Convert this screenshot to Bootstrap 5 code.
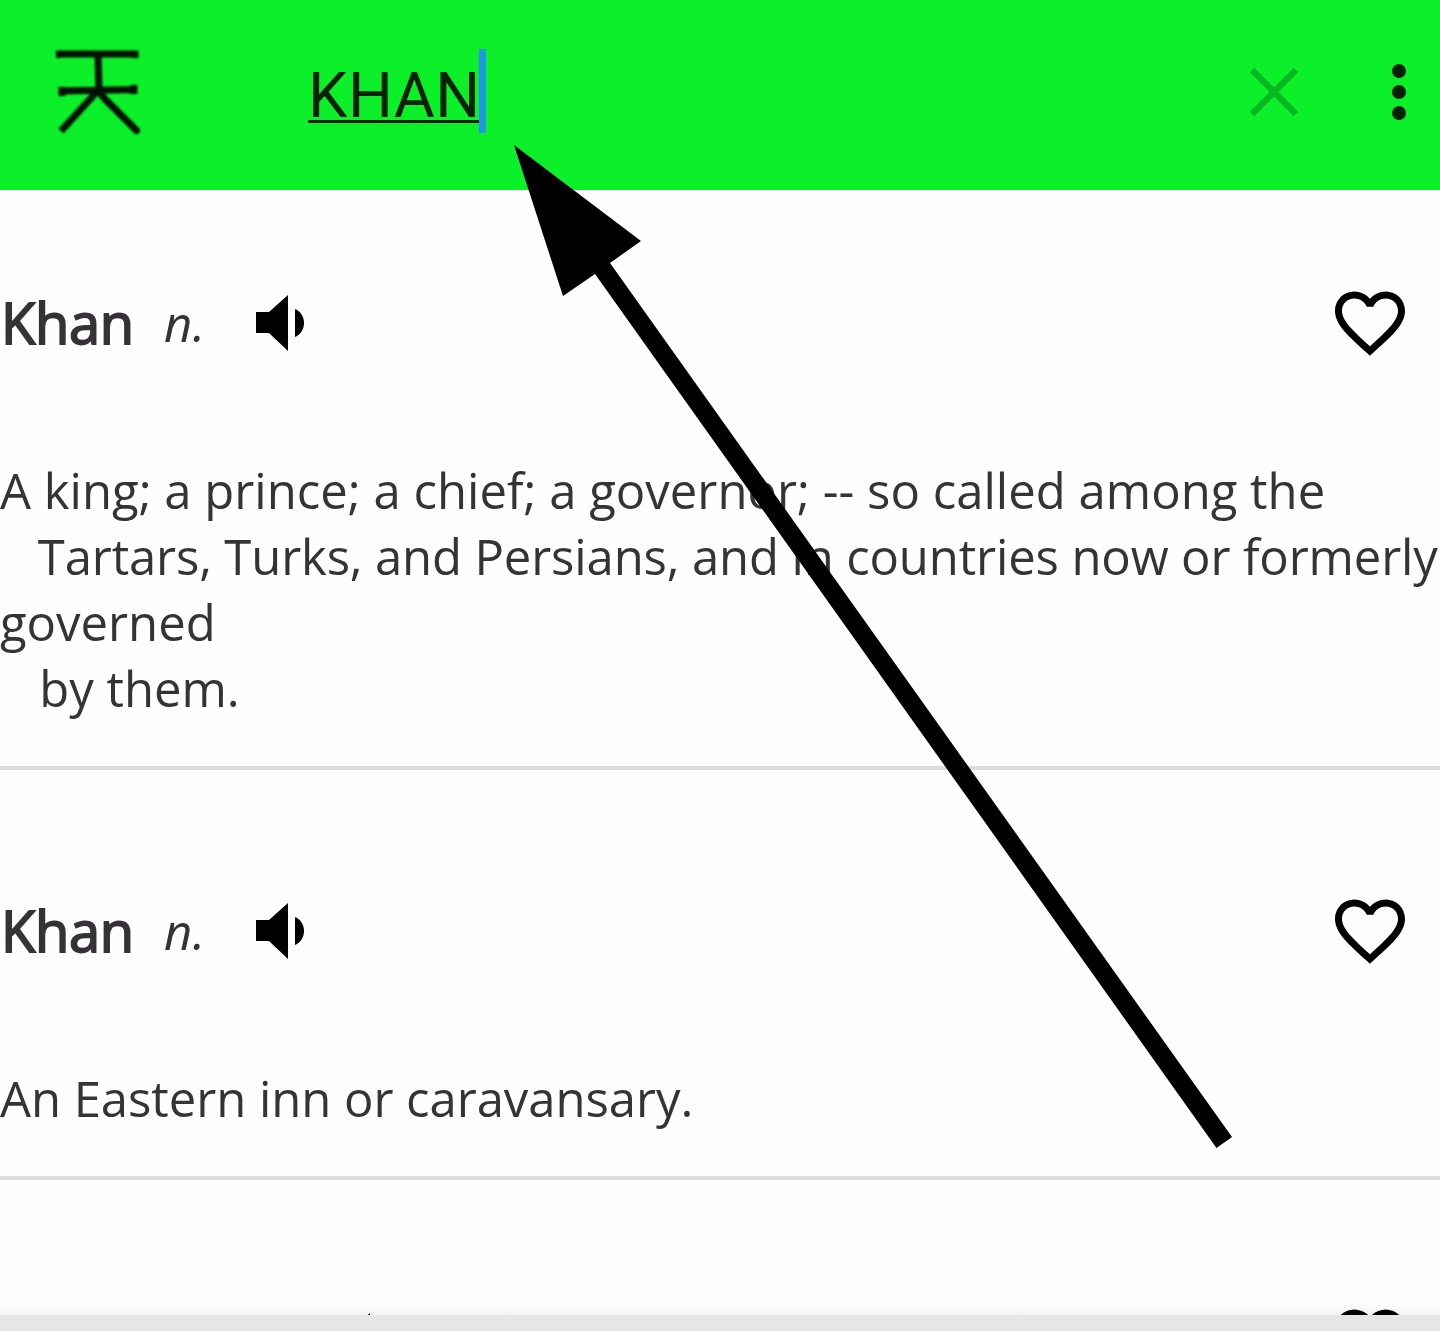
<!DOCTYPE html>
<html lang="en">
<head>
<meta charset="utf-8">
<meta name="viewport" content="width=device-width, initial-scale=1">
<title>KHAN</title>
<link href="https://cdn.jsdelivr.net/npm/bootstrap@5.3.0/dist/css/bootstrap.min.css" rel="stylesheet">
<style>
  html, body { height: 1331px; overflow: hidden; }
  body { background: #fefefe; color: #353335; font-family: "Open Sans", "Noto Sans", sans-serif; }
  .topbar { height: 190px; padding: 0 34px 6px 56px; background: #0cf029; }
  .logo { filter: blur(.8px); }
  .query { margin-left: 168px; padding-top: 2px; font: 400 63px/84px Roboto, sans-serif; color: #052209; letter-spacing: .4px; }
  .query-text { padding-top: 5px; text-decoration: underline; text-decoration-thickness: 3px; text-underline-offset: 3px; text-decoration-skip-ink: none; }
  .caret { width: 7px; height: 84px; background: #2196e8; margin-left: -2px; }
  .dots { margin-left: 94px; }
  .entry { padding: 101px 0 45px; border-bottom: 4px solid #dddddf; }
  .entry-first { padding-top: 73px; }
  .entry-head { height: 120px; margin-bottom: 74px; padding: 0 28px 0 0; }
  .word { font-size: 56px; line-height: 76px; padding: 0 0 3px 1px; letter-spacing: -.3px; -webkit-text-stroke: 1.8px #353335; }
  .pos { font-size: 49px; line-height: 66px; font-style: italic; margin-left: 30px; width: 41px; letter-spacing: .5px; }
  .speaker { margin-left: 51px; }
  .definition { font-size: 49px; line-height: 66px; white-space: pre; }
  .line-wide { letter-spacing: .025px; }
  .line-tight { letter-spacing: -.13px; }
  .line-short { letter-spacing: -.04px; }
  .line-last { padding-left: 1px; }
  .speaker-next { margin-left: 338px; }
  .bottombar { height: 16px; background: #e5e6e8; }
  .results { background: linear-gradient(#fefefe 0 calc(100% - 12px), #f3f3f5); }
  .arrow { z-index: 5; }
</style>
</head>
<body class="d-flex flex-column position-relative">
<header class="topbar d-flex align-items-center flex-shrink-0">
  <svg class="logo" width="84" height="84" viewBox="0 0 84 84" fill="none" stroke="#031006" stroke-width="7">
    <path d="M0 4H81M1 1V8M79 1V8M42 4L43 40M4 41L81 39.500M6 37V46M78 35V44M41 40L36 47 5 81M41 40L50 50 83 83"/>
  </svg>
  <div class="query d-flex flex-grow-1"><span class="query-text">KHAN</span><span class="caret"></span></div>
  <svg width="48" height="48" viewBox="0 0 48 48" stroke="#09b720" stroke-width="6.500"><path d="M2 2L46 46M46 2L2 46"/></svg>
  <svg class="dots" width="14" height="56" viewBox="0 0 14 56" fill="#052209"><circle cx="7" cy="7" r="7"/><circle cx="7" cy="28" r="7"/><circle cx="7" cy="49" r="7"/></svg>
</header>
<main class="results flex-grow-1 overflow-hidden">
  <article class="entry entry-first">
    <div class="entry-head d-flex align-items-center">
      <span class="word">Khan</span><span class="pos">n.</span>
      <svg class="speaker" width="48" height="56" viewBox="0 0 48 56"><path d="M0 17H13L32 0V56L13 38H0ZM39 14C51 19 51 37 39 42Z"/></svg>
      <svg class="ms-auto" width="84" height="84" viewBox="0 0 24 24"><path d="M16.5 3c-1.74 0-3.41.81-4.5 2.09C10.91 3.81 9.24 3 7.5 3 4.42 3 2 5.42 2 8.5c0 3.78 3.4 6.86 8.55 11.54L12 21.35l1.45-1.32C18.6 15.36 22 12.28 22 8.5 22 5.42 19.58 3 16.5 3zm-4.4 15.55l-.1.1-.1-.1C7.14 14.24 4 11.39 4 8.5 4 6.5 5.5 5 7.5 5c1.54 0 3.04.99 3.57 2.36h1.87C13.46 5.99 14.96 5 16.5 5c2 0 3.5 1.5 3.5 3.5 0 2.89-3.14 5.74-7.9 10.05z"/></svg>
    </div>
    <div class="definition"><div class="line-wide">A king; a prince; a chief; a governor; -- so called among the</div><div class="line-tight">   Tartars, Turks, and Persians, and in countries now or formerly</div><div>governed</div><div class="line-last">   by them.</div></div>
  </article>
  <article class="entry">
    <div class="entry-head d-flex align-items-center">
      <span class="word">Khan</span><span class="pos">n.</span>
      <svg class="speaker" width="48" height="56" viewBox="0 0 48 56"><path d="M0 17H13L32 0V56L13 38H0ZM39 14C51 19 51 37 39 42Z"/></svg>
      <svg class="ms-auto" width="84" height="84" viewBox="0 0 24 24"><path d="M16.5 3c-1.74 0-3.41.81-4.5 2.09C10.91 3.81 9.24 3 7.5 3 4.42 3 2 5.42 2 8.5c0 3.78 3.4 6.86 8.55 11.54L12 21.35l1.45-1.32C18.6 15.36 22 12.28 22 8.5 22 5.42 19.58 3 16.5 3zm-4.4 15.55l-.1.1-.1-.1C7.14 14.24 4 11.39 4 8.5 4 6.5 5.5 5 7.5 5c1.54 0 3.04.99 3.57 2.36h1.87C13.46 5.99 14.96 5 16.5 5c2 0 3.5 1.5 3.5 3.5 0 2.89-3.14 5.74-7.9 10.05z"/></svg>
    </div>
    <div class="definition line-short">An Eastern inn or caravansary.</div>
  </article>
  <article class="entry">
    <div class="entry-head d-flex align-items-center">
      <svg class="speaker-next" width="48" height="56" viewBox="0 0 48 56"><path d="M0 17H13L32 0V56L13 38H0ZM39 14C51 19 51 37 39 42Z"/></svg>
      <svg class="ms-auto" width="84" height="84" viewBox="0 0 24 24"><path d="M16.5 3c-1.74 0-3.41.81-4.5 2.09C10.91 3.81 9.24 3 7.5 3 4.42 3 2 5.42 2 8.5c0 3.78 3.4 6.86 8.55 11.54L12 21.35l1.45-1.32C18.6 15.36 22 12.28 22 8.5 22 5.42 19.58 3 16.5 3z"/></svg>
    </div>
  </article>
</main>
<footer class="bottombar flex-shrink-0"></footer>
<svg class="arrow position-absolute top-0 start-0 pe-none" width="1440" height="1331" viewBox="0 0 1440 1331"><path d="M514 145L641 241 610 263 1232 1137 1216.500 1148 595 274 563 296Z"/></svg>
<script src="https://cdn.jsdelivr.net/npm/bootstrap@5.3.0/dist/js/bootstrap.bundle.min.js"></script>
</body>
</html>
